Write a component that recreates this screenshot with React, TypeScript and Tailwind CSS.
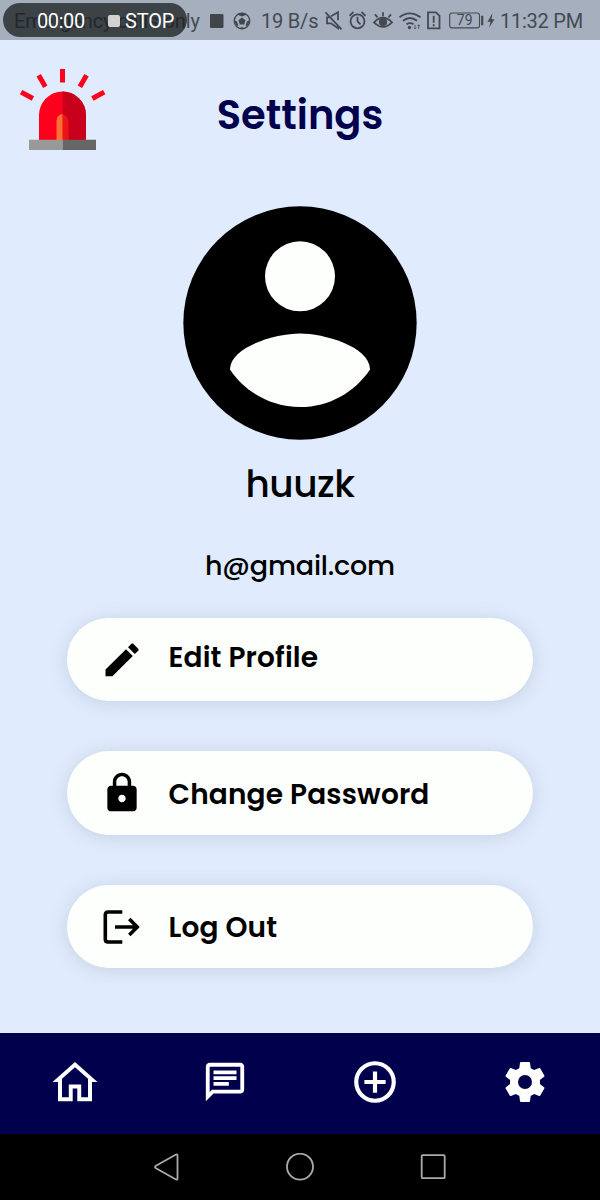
import React from "react";

function Siren() {
  return (
    <svg className="h-[84px] w-[88px]" viewBox="18 67 88 84">
      <g fill="#fd001c">
        <rect x="60" y="69" width="5" height="13.5" />
        <rect x="-2.5" y="-6.7" width="5" height="13.4" transform="translate(42 81) rotate(-30)" />
        <rect x="-2.5" y="-6.7" width="5" height="13.4" transform="translate(83.2 81) rotate(30)" />
        <rect x="-2.5" y="-6.7" width="5" height="13.4" transform="translate(27 95.3) rotate(-62)" />
        <rect x="-2.5" y="-6.7" width="5" height="13.4" transform="translate(98.3 95.3) rotate(62)" />
        <path d="M39 140V115a23.5 23.5 0 0 1 47 0v25z" />
      </g>
      <path fill="#c8001c" d="M62.5 91.5A23.5 23.5 0 0 1 86 115v25H62.5z" />
      <path fill="#fb2018" d="M62.5 114q6 2 6 9v17h-6z" opacity=".65" />
      <path fill="#ff7033" d="M56.5 140v-19q0-6 6-7v26z" />
      <path fill="#999" d="M29 139.7h33.5V150H29z" />
      <path fill="#666" d="M62.5 139.7H96V150H62.5z" />
    </svg>
  );
}

function StatusBar() {
  return (
    <header className="relative h-10 shrink-0 bg-[#a5afbd] font-['Roboto',sans-serif] text-[#434a52]">
      <div className="flex h-10 items-center pl-[14px] pt-px text-[20px]">
        <span className="w-[187px] whitespace-nowrap tracking-[-0.05px]">Emergency calls only</span>
        <svg className="ml-[9px] h-[14px] w-[14px]" viewBox="0 0 14 14"><rect width="13.5" height="14" rx="1" fill="#41464b" /></svg>
        <svg className="ml-[9px] h-[18px] w-[18px]" viewBox="0 0 18 18" fill="#41464b">
          <circle cx="9" cy="9" r="7.8" fill="none" stroke="#41464b" strokeWidth="1.2" />
          <path d="M9 5.5l3.5 2.7-1.3 4.2H6.8L5.5 8.2zM4.300 2.500 9 4.500l4.700-2L9 .8zM1 8l3 1.500 1.500 4.500-2.500-.5zM17 8l-3 1.500-1.500 4.500 2.500-.5zM6 16.500l3-1.500 3 1.500-3 .8z" />
        </svg>
        <span className="ml-[10px] w-[60px] whitespace-nowrap tracking-[-0.2px]">19 B/s</span>
        <svg className="h-10 w-[174px] shrink-0" viewBox="321 0.7 174 40" fill="none" stroke="#434a52" strokeWidth="1.8">
          <path d="M325.500 12l16 17M331 16l7-4v8M338 25v3l-7-5h-4v-6h3" />
          <circle cx="357.500" cy="21" r="7" />
          <path d="M357.500 16.500V21l3 3M349.500 15.500l4-4M365.500 15.500l-4-4" />
          <path d="M374 22q9-9 18 0-9 9-18 0zM383 12v4M375 14l2.500 3M391 14l-2.500 3" />
          <circle cx="383" cy="21.800" r="3.200" fill="#434a52" />
          <path d="M399.500 17q10-8 21 0M403 20.500q7-5.500 14 0M406.500 24q3.500-2.500 7 0" />
          <circle cx="409.500" cy="27.200" r="1.700" fill="#434a52" stroke="none" />
          <path d="M415 24.500v4m-1.300-1.300 1.300 1.300 1.300-1.300M418.700 28.500v-4m-1.300 1.300 1.300-1.300 1.300 1.300" strokeWidth="0.800" />
          <path d="M428 12h8l3.500 3.500V28H428zM433.700 15.500v7M433.700 24v2" />
          <rect x="449.700" y="12.700" width="29.800" height="14.900" rx="2.500" strokeWidth="1.100" />
          <path d="M482.200 15.500v9.500" strokeWidth="2.200" />
          <path d="M492.500 13l-5 8.500h3l-1.500 6 5.500-8.500h-3z" fill="#434a52" stroke="none" />
          <text x="464.700" y="25.200" textAnchor="middle" fontSize="14" fill="#434a52" stroke="none">79</text>
        </svg>
        <span className="ml-[5px] whitespace-nowrap tracking-[-0.25px]">11:32 PM</span>
      </div>
      <div className="absolute left-[3px] top-[3px] flex h-[34px] w-[184px] items-center rounded-full bg-[#191d1f]/75 pl-[34px] pt-px text-[20px] text-white">
        <span className="w-[49px] tracking-[-0.4px]">00:00</span>
        <span className="ml-[22px] h-3 w-3 rounded-[2px] bg-[#d2d2cf]" />
        <span className="ml-[5px] tracking-[-0.2px]">STOP</span>
      </div>
    </header>
  );
}

function EditIcon() {
  return (
    <svg className="h-11 w-11" viewBox="0 0 44 44">
      <path d="M5.500 38.200V31.500L26 11.200l6.800 6.700L12.400 38.200zM28 9.200l3.700-3.600 1.300 0 5.500 5.500 0 1.300-3.700 3.600z" />
    </svg>
  );
}

function LockIcon() {
  return (
    <svg className="mt-px h-11 w-11" viewBox="0 0 24 24">
      <path d="M18 8h-1V6c0-2.760-2.240-5-5-5S7 3.240 7 6v2H6c-1.100 0-2 .9-2 2v10c0 1.100.9 2 2 2h12c1.100 0 2-.9 2-2V10c0-1.100-.9-2-2-2zm-6 9c-1.100 0-2-.9-2-2s.9-2 2-2 2 .9 2 2-.9 2-2 2zm3.100-9H8.900V6c0-1.710 1.390-3.100 3.100-3.100 1.710 0 3.100 1.390 3.100 3.100v2z" />
    </svg>
  );
}

function LogoutIcon() {
  return (
    <svg className="mt-px h-11 w-11" viewBox="0 0 44 44" fill="none" stroke="#000" strokeWidth="3.600">
      <path d="M22.300 7H8q-2.700 0-2.700 2.700v24.600Q5.300 37 8 37h14.300M15 22h22.500M29.300 14.100l7.900 7.900-7.900 7.900" />
    </svg>
  );
}

const actions = [
  { label: "Edit Profile", icon: <EditIcon />, text: "tracking-[0.15px] -mt-[3px]" },
  { label: "Change Password", icon: <LockIcon />, text: "tracking-[0.15px] mt-[5px]" },
  { label: "Log Out", icon: <LogoutIcon />, text: "tracking-[0.15px] mt-[4px]" },
];

export default function App() {
  return (
    <div className="flex h-[1200px] w-[600px] flex-col overflow-hidden bg-[#e0ecfd] font-['Poppins','Inter',sans-serif] text-black">
      <StatusBar />
      <main className="flex h-[993px] shrink-0 flex-col items-center">
        <div className="grid w-full grid-cols-[88px_1fr_88px] items-start px-[18px] pt-[27px]">
          <Siren />
          <h1 className="mt-[24px] text-center text-[40px] font-semibold leading-[48px] tracking-[0px] text-[#00004d]">Settings</h1>
        </div>
        <svg className="mt-[32px] h-[280px] w-[280px] shrink-0" viewBox="0 0 24 24">
          <circle cx="12" cy="12" r="10" />
          <circle cx="12" cy="8" r="3" fill="#fdfffd" />
          <path fill="#fdfffd" d="M12 19.200c-2.500 0-4.710-1.280-6-3.220.03-1.990 4-3.080 6-3.080 1.990 0 5.970 1.090 6 3.080-1.290 1.940-3.500 3.220-6 3.220z" />
        </svg>
        <h2 className="-mt-[3px] text-[37.500px] font-medium leading-[48px] tracking-[-0.5px]">huuzk</h2>
        <p className="mt-[42px] text-[27px] font-medium leading-[32px] tracking-[-0.2px]">h@gmail.com</p>
        <div className="mt-[36px] flex flex-col gap-[50px]">
          {actions.map((a) => (
            <button key={a.label} className="flex h-[83.300px] w-[466px] items-center rounded-full bg-[#fdfffd] pl-[32.500px] text-left shadow-[0_2px_18px_rgba(100,115,140,0.22)]">
              {a.icon}
              <span className="ml-[25px] text-[28px] font-semibold leading-9"><span className={"block " + a.text}>{a.label}</span></span>
            </button>
          ))}
        </div>
      </main>
      <nav className="grid h-[101px] shrink-0 grid-cols-4 place-items-center bg-[#00004d] pb-[4px] text-white">
        <svg className="h-[46px] w-[46px]" viewBox="0 0 46 46" fill="currentColor" fillRule="evenodd"><path d="M23 2.900 45.500 23H40V42.300H25.300V29.600h-4.600v12.700H6V23H.5zM23 8.300 10 19.800v18.500h6.800V25.600h12.400v12.700H36V19.800z" /></svg>
        <svg className="h-[46px] w-[46px]" viewBox="0 0 24 24" fill="currentColor"><path d="M4 4h16v12H5.170L4 17.170V4m0-2c-1.100 0-1.990.9-1.990 2L2 22l4-4h14c1.100 0 2-.9 2-2V4c0-1.100-.9-2-2-2H4zm2 10h8v2H6v-2zm0-3h12v2H6V9zm0-3h12v2H6V6z" /></svg>
        <svg className="h-[50px] w-[50px]" viewBox="0 0 24 24" fill="none" stroke="currentColor" strokeWidth="2"><circle cx="12" cy="12" r="9" /><path d="M12 6.900v10.200M6.900 12h10.200" /></svg>
        <svg className="h-[48px] w-[48px]" viewBox="0 0 24 24" fill="currentColor"><path d="M12 15.500A3.500 3.500 0 0 1 8.500 12 3.500 3.500 0 0 1 12 8.500a3.500 3.500 0 0 1 3.500 3.500 3.500 3.500 0 0 1-3.500 3.500m7.430-2.530c.04-.32.07-.64.07-.97s-.03-.66-.07-1l2.110-1.630c.19-.15.24-.42.12-.64l-2-3.460c-.12-.22-.39-.31-.61-.22l-2.490 1c-.52-.39-1.060-.73-1.690-.98l-.37-2.650A.506.506 0 0 0 14 2h-4c-.25 0-.46.18-.5.42l-.37 2.650c-.63.25-1.170.59-1.690.98l-2.490-1c-.22-.09-.49 0-.61.22l-2 3.460c-.13.22-.07.49.12.64L4.570 11c-.04.34-.07.67-.07 1s.03.65.07.97l-2.110 1.660c-.19.15-.25.42-.12.640l2 3.460c.12.22.39.3.61.22l2.490-1.010c.52.4 1.060.74 1.690.99l.37 2.650c.04.24.25.42.5.42h4c.25 0 .46-.18.5-.42l.37-2.650c.63-.26 1.170-.59 1.690-.99l2.490 1.010c.22.08.49 0 .61-.22l2-3.460c.12-.22.07-.49-.12-.64z" /></svg>
      </nav>
      <footer className="flex h-[66px] shrink-0 items-center justify-center gap-[105px] bg-black">
        <svg className="h-7 w-7" viewBox="0 0 28 28" fill="none" stroke="#aaa" strokeWidth="1.800" strokeLinejoin="round"><path d="M2.500 13 23 1.500q1.500-.7 1.500 1v23q0 1.700-1.500 1L2.500 15q-1-1 0-2z" /></svg>
        <svg className="h-7 w-7" viewBox="0 0 28 28" fill="none" stroke="#aaa" strokeWidth="1.800"><circle cx="14" cy="13.700" r="13" /></svg>
        <svg className="h-7 w-7" viewBox="0 0 28 28" fill="none" stroke="#aaa" strokeWidth="1.800"><rect x="2.700" y="2.200" width="23" height="23" rx="1" /></svg>
      </footer>
    </div>
  );
}
